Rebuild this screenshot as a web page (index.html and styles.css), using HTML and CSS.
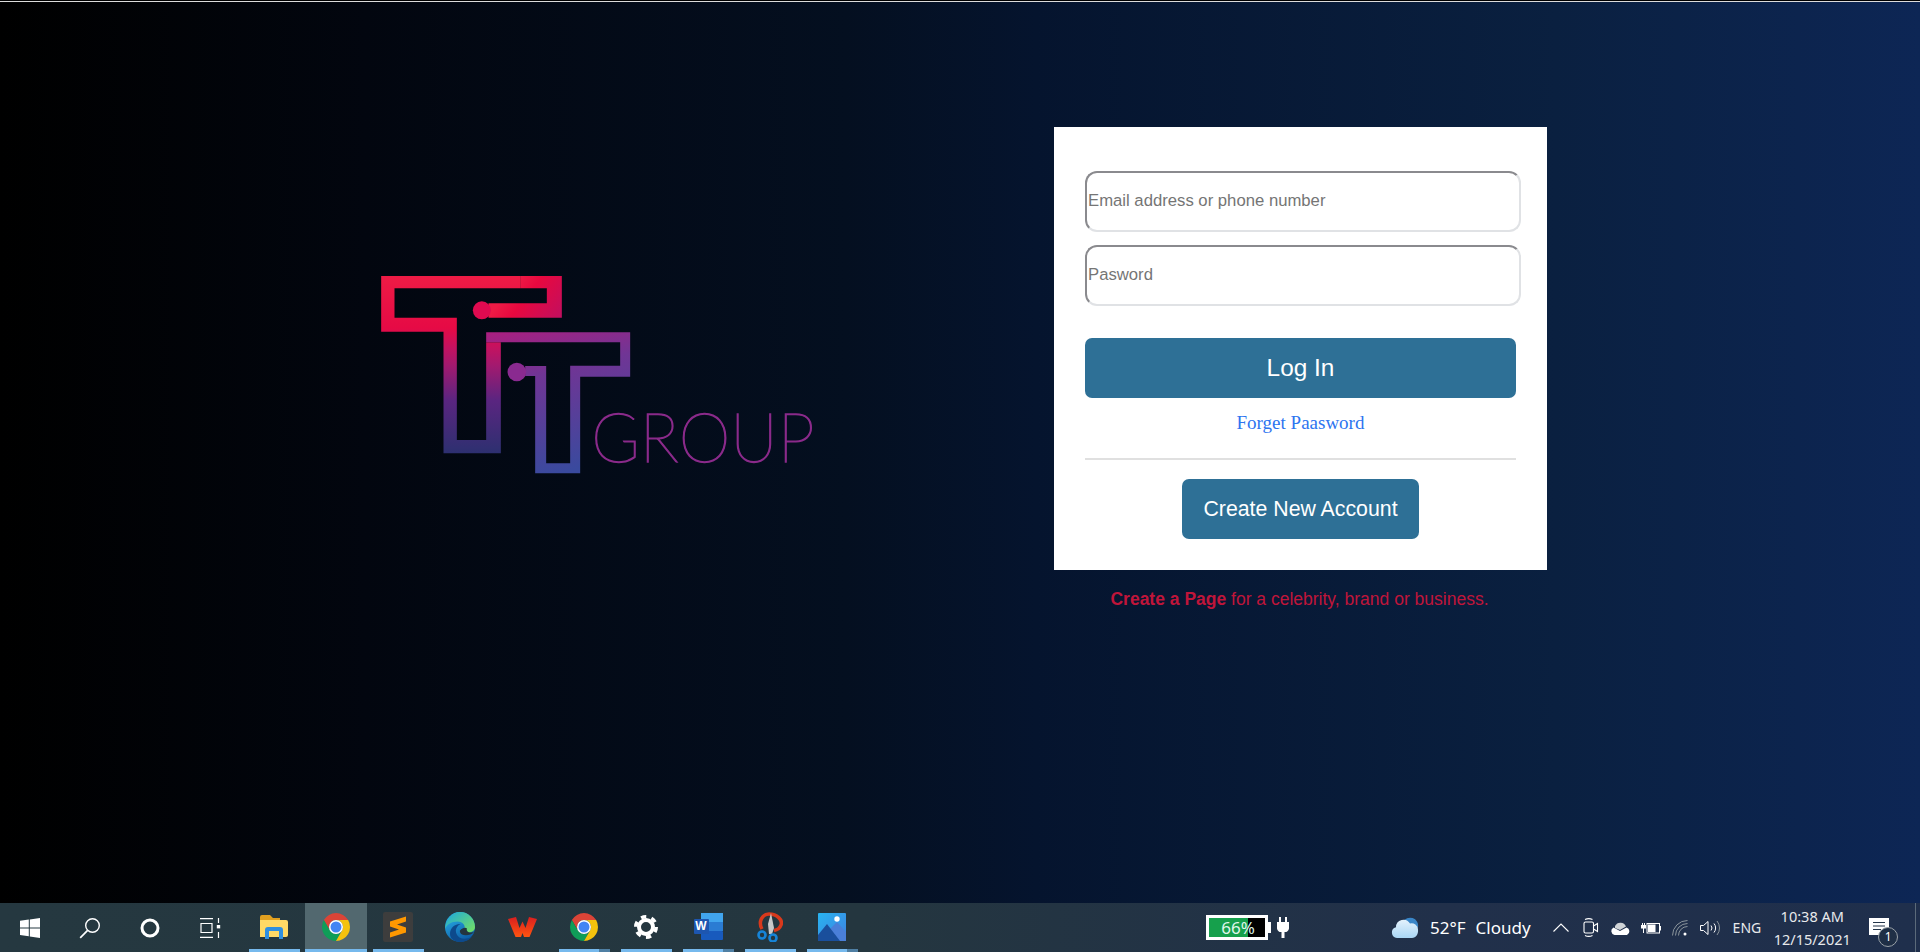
FILE: index.html
```html
<!DOCTYPE html>
<html lang="en">
<head>
<meta charset="utf-8">
<title>TT Group</title>
<link rel="stylesheet" href="styles.css">
</head>
<body>
<svg class="defs" width="0" height="0" aria-hidden="true">
  <defs>
    <symbol id="chrome" viewBox="0 0 24 24">
      <path fill="#db4437" d="M1.61 6A12 12 0 0 1 22.39 6H12A6 6 0 0 0 6.8 15Z"/>
      <path fill="#0f9d58" d="M1.61 6L6.8 15A6 6 0 0 0 17.2 15L12 24A12 12 0 0 1 1.61 6Z"/>
      <path fill="#f4c20d" d="M22.39 6H12A6 6 0 0 1 17.2 15L12 24A12 12 0 0 0 22.39 6Z"/>
      <circle cx="12" cy="12" r="6" fill="#fff"/>
      <circle cx="12" cy="12" r="4.7" fill="#4285f4"/>
    </symbol>
    <linearGradient id="t0" gradientUnits="userSpaceOnUse" x1="470" y1="90" x2="610" y2="200">
      <stop offset="0" stop-color="#ee1b45"/>
      <stop offset=".3" stop-color="#e8083f"/>
      <stop offset="1" stop-color="#c00f60"/>
    </linearGradient>
    <linearGradient id="t1" gradientUnits="userSpaceOnUse" x1="0" y1="80" x2="0" y2="610">
      <stop offset="0" stop-color="#ee1b45"/>
      <stop offset=".29" stop-color="#e60a45"/>
      <stop offset=".4" stop-color="#c41260"/>
      <stop offset=".51" stop-color="#a01a70"/>
      <stop offset=".7" stop-color="#5a2580"/>
      <stop offset="1" stop-color="#2d3070"/>
    </linearGradient>
    <linearGradient id="t2" gradientUnits="userSpaceOnUse" x1="480" y1="225" x2="590" y2="670">
      <stop offset="0" stop-color="#aa1f80"/>
      <stop offset=".35" stop-color="#703595"/>
      <stop offset="1" stop-color="#3a4a9e"/>
    </linearGradient>
    <linearGradient id="edgeBase" x1="0" y1="0" x2=".5" y2="1">
      <stop offset="0" stop-color="#2bb8ee"/>
      <stop offset="1" stop-color="#0e5fa8"/>
    </linearGradient>
    <linearGradient id="edgeTop" x1="0" y1="0" x2="1" y2=".8">
      <stop offset="0" stop-color="#1aa7e0"/>
      <stop offset="1" stop-color="#6fdc6a"/>
    </linearGradient>
    <linearGradient id="photoBg" x1="0" y1="0" x2="1" y2="1">
      <stop offset="0" stop-color="#28b4f0"/>
      <stop offset="1" stop-color="#3f7fe0"/>
    </linearGradient>
    <linearGradient id="cloud" x1="0" y1="0" x2="0" y2="1">
      <stop offset="0" stop-color="#e4f2fc"/>
      <stop offset="1" stop-color="#a9d6f5"/>
    </linearGradient>
    <linearGradient id="wps" x1="0" y1="0" x2="0" y2="1">
      <stop offset="0" stop-color="#d91f20"/>
      <stop offset="1" stop-color="#ff5410"/>
    </linearGradient>
  </defs>
</svg>

<main class="page">
  <svg class="logo" viewBox="60 75 1400 600" role="img" aria-label="TT Group">
    <path fill="url(#t1)" d="M480 115H103V203H290V570H378V277H422V610H250V245H63V78H480Z"/>
    <path fill="url(#t0)" d="M385 160H560V115H480V78H605V203H385Z"/>
    <circle cx="365" cy="181" r="27" fill="#e00a50"/>
    <path fill="url(#t2)" d="M378 277V247H810V380H660V670H525V378H495V348H558V640H630V347H780V277Z"/>
    <circle cx="470" cy="366" r="28" fill="#8a2a90"/>
    <text class="logo-word" x="693" y="635" textLength="670" lengthAdjust="spacingAndGlyphs">GROUP</text>
  </svg>

  <section class="side">
    <form class="card">
      <input class="field" type="text" placeholder="Email address or phone number">
      <input class="field field-second" type="password" placeholder="Pasword">
      <button class="btn btn-login" type="button">Log In</button>
      <a class="forgot" href="#">Forget Paasword</a>
      <hr class="rule">
      <button class="btn btn-create" type="button">Create New Account</button>
    </form>
    <p class="tagline"><b>Create a Page</b> for a celebrity, brand or business.</p>
  </section>
</main>

<footer class="taskbar">
  <div class="sys-btn">
    <svg width="22" height="22" viewBox="0 0 22 22"><path fill="#fff" d="M1 3.8L9.8 2.6V10.4H1ZM10.8 2.4L21 1V10.4H10.8ZM1 11.4H9.8V19.3L1 18.1ZM10.8 11.4H21V21L10.8 19.5Z"/></svg>
  </div>
  <div class="sys-btn">
    <svg width="22" height="22" viewBox="0 0 22 22" fill="none" stroke="#fff" stroke-width="1.4"><circle cx="13.5" cy="8.5" r="6.8"/><path d="M8.6 13.4L1.2 20.8" stroke-width="1.7"/></svg>
  </div>
  <div class="sys-btn">
    <svg width="20" height="20" viewBox="0 0 20 20" fill="none" stroke="#fff" stroke-width="3"><circle cx="10" cy="10" r="8"/></svg>
  </div>
  <div class="sys-btn">
    <svg width="22" height="20" viewBox="0 0 22 20" fill="none" stroke="#fff" stroke-width="1.2"><path d="M1 .6H14M1 19.4H14M2 5.5H13V14.5H2ZM19.5 0V5M19.5 14V20"/><rect x="17.8" y="7" width="3.4" height="3.4" fill="#fff" stroke="none"/></svg>
  </div>

  <div class="apps">
    <div class="app open">
      <svg width="28" height="24" viewBox="0 0 28 24"><path fill="#e0a020" d="M0 2a2 2 0 0 1 2-2H10l3 3H20V8H0Z"/><path fill="#ffd966" d="M0 5H26a2 2 0 0 1 2 2V20a2 2 0 0 1-2 2H0Z"/><path fill="#2f8fe0" d="M5 24V15a3 3 0 0 1 3-3H20a3 3 0 0 1 3 3V24H19V16H9V24Z"/></svg>
    </div>
    <div class="app open active"><svg width="28" height="28"><use href="#chrome"/></svg></div>
    <div class="app open">
      <svg width="30" height="30" viewBox="0 0 30 30"><rect width="30" height="30" rx="2" fill="#3d3d3d"/><path fill="#ff9800" d="M23 4.500V9.500L14 12.500L23 15.500V20.500L7 25.500V20.500L16 17.500L7 14.500V9.500Z"/></svg>
    </div>
    <div class="app">
      <svg width="30" height="30" viewBox="0 0 30 30"><circle cx="15" cy="15" r="15" fill="url(#edgeBase)"/><path fill="url(#edgeTop)" d="M15 0A15 15 0 0 1 30 15C30 19 26.500 20.500 23 20.500C19 20.500 17.500 18.500 19.500 16C20.500 14 18 9.500 12.500 9.500C6 9.500 1.500 13 0 17C.5 8 7 0 15 0Z"/><path fill="#0d4a8c" d="M5 22C5 15 11 11.500 15.500 12C9.500 15 9.500 22 14.500 25.500C18 27.500 23 27 27 24.500C24 28.500 19.500 30 15 30C9 29.500 5 26.500 5 22Z"/><path fill="#24353f" d="M15 18.500C17.500 15.500 20.500 15 22 16.500C21 18.500 23 21 27 20.500L29 20C26 23.500 20 24 17 22.500C15.500 21.500 14.500 20 15 18.500Z"/></svg>
    </div>
    <div class="app">
      <svg width="29" height="20" viewBox="0 0 29 20"><path fill="url(#wps)" d="M0 2L8 0L11.500 11L14.500 4.500L17.500 11L21 0L29 2L21.500 20H16L14.500 16L13 20H7.500Z"/></svg>
    </div>
    <div class="app open stacked"><svg width="28" height="28"><use href="#chrome"/></svg></div>
    <div class="app open">
      <svg width="24" height="24" viewBox="0 0 24 24"><circle cx="12" cy="12" r="7" fill="none" stroke="#fff" stroke-width="4"/><circle cx="12" cy="12" r="10.200" fill="none" stroke="#fff" stroke-width="3.600" stroke-dasharray="5.300 5.380"/></svg>
    </div>
    <div class="app open stacked">
      <div class="word-icon">
        <svg width="29" height="27" viewBox="0 0 29 27"><rect x="7" width="22" height="9" fill="#41a5ee"/><rect x="7" y="9" width="22" height="9" fill="#2b7cd3"/><rect x="7" y="18" width="22" height="9" rx="1" fill="#185abd"/></svg>
        <span class="word-w">W</span>
      </div>
    </div>
    <div class="app open">
      <svg width="26" height="30" viewBox="0 0 26 30"><path fill="none" stroke="#d8391c" stroke-width="3.500" d="M5 17C1 10 5 2 12 2C20 2 26 8 24 13C23 16 20 18 17 18.500"/><path fill="#c9c9c9" d="M14 1L17 16L15 22H12L11 12Z"/><circle cx="5" cy="23" r="3.500" fill="none" stroke="#1684d8" stroke-width="2.600"/><circle cx="16" cy="26" r="3.500" fill="none" stroke="#1684d8" stroke-width="2.600"/></svg>
    </div>
    <div class="app open stacked">
      <svg width="28" height="28" viewBox="0 0 28 28"><rect width="28" height="28" rx="1" fill="url(#photoBg)"/><circle cx="19" cy="6" r="2.700" fill="#fff"/><path fill="#4a7fd8" d="M12 16L19 9L28 19V28H14Z"/><path fill="#1a4f9c" d="M0 22L9 11L22 28H0Z"/></svg>
    </div>
  </div>

  <div class="meter">
    <span class="meter-body"><span class="meter-text">66%</span></span>
    <span class="meter-nub"></span>
  </div>
  <svg class="plug" width="12" height="21" viewBox="0 0 12 21"><path fill="#fff" d="M2 0H4V5H8V0H10V5H12V11.500A4 4 0 0 1 7.500 15V21H4.500V15A4 4 0 0 1 0 11.500V5H2Z"/></svg>

  <div class="weather">
    <svg width="28" height="22" viewBox="0 0 28 22"><path fill="#3a86c8" d="M12 5A8 8 0 0 1 27 10L20 14Z"/><path fill="url(#cloud)" d="M6 21A5.500 5.500 0 0 1 5 10.200A7.500 7.500 0 0 1 19 6.500A6.500 6.500 0 0 1 27 12.500C27.500 17 25 21 21 21Z"/></svg>
    <span class="weather-temp">52°F</span>
    <span class="weather-sky">Cloudy</span>
  </div>

  <div class="tray">
    <div class="tray-slot"><svg width="16" height="9" viewBox="0 0 16 9" fill="none" stroke="#fff" stroke-width="1.100"><path d="M.5 8.500L8 1L15.500 8.500"/></svg></div>
    <div class="tray-slot"><svg width="16" height="19" viewBox="0 0 16 19" fill="none" stroke="#fff" stroke-width="1.100"><rect x="1" y="4" width="9.500" height="11" rx="1.500"/><path d="M10.500 8L14.500 5.500V13.500L10.500 11M2 1.500C4.500.3 7 .3 9.500 1.500M2 17.500C4.500 18.700 7 18.700 9.500 17.500"/></svg></div>
    <div class="tray-slot"><svg width="21" height="14" viewBox="0 0 21 14"><path fill="#cfd3d6" d="M5 5A6 6 0 0 1 16 5.500L10 9L5 7Z"/><path fill="#fff" d="M4.500 14A4 4 0 0 1 3.500 6.500L10 10L16.500 6.500A4 4 0 0 1 17 14Z"/></svg></div>
    <div class="tray-slot"><svg width="20" height="12" viewBox="0 0 20 12"><path fill="#fff" d="M1 1H2V3H3V1H4V3H5V6.500H3V11H2V6.500H0V3H1Z"/><rect x="6" y="1.500" width="12.500" height="9.500" fill="none" stroke="#fff"/><rect x="7" y="2.500" width="7.500" height="7.500" fill="#fff"/><rect x="19" y="4" width="1" height="4.500" fill="#fff"/></svg></div>
    <div class="tray-slot"><svg width="17" height="16" viewBox="0 0 17 16" fill="none" stroke="#8b959c" stroke-width="1"><path d="M.5 15.500A15 15 0 0 1 15.500.5M3.500 15.500A12 12 0 0 1 15.500 3.500M6.500 15.500A9 9 0 0 1 15.500 6.500"/><circle cx="13" cy="14" r="1.500" fill="#fff" stroke="none"/></svg></div>
    <div class="tray-slot"><svg width="21" height="16" viewBox="0 0 21 16" fill="none" stroke="#fff" stroke-width="1"><path d="M.5 5.500H3.500L8 1.500V14.500L3.500 10.500H.5Z"/><path d="M11 5.500A4 4 0 0 1 11 10.500M14 3.500A7 7 0 0 1 14 12.500" /><path d="M17 1A11 11 0 0 1 17 15" stroke="#8b959c"/></svg></div>
  </div>
  <span class="lang">ENG</span>
  <div class="clock"><span>10:38 AM</span><span>12/15/2021</span></div>
  <div class="notify">
    <svg width="20" height="17" viewBox="0 0 20 17"><path fill="#fff" d="M0 0H20V17H0Z"/><path stroke="#24354a" stroke-width="1.100" d="M4 4.500H16M4 8H16M4 11.500H12"/></svg>
    <span class="badge">1</span>
  </div>
  <span class="desktop-edge"></span>
</footer>
</body>
</html>
```
FILE: styles.css
```css
* { box-sizing: border-box; }

html, body { margin: 0; height: 100%; }

body {
  display: flex;
  flex-direction: column;
  height: 952px;
  overflow: hidden;
  font-family: "Liberation Sans", Arial, sans-serif;
  background: linear-gradient(90deg, #000 0%, #02060f 19%, #040f20 44%, #05142e 54%, #0a2040 81%, #0d2655 100%);
  border-top: 1px solid #000;
}

.defs { position: absolute; }

.page {
  flex: 1;
  display: flex;
  align-items: flex-start;
  padding: 125px 0 0 380px;
  border-top: 1px solid #dcdcdc;
}

.logo {
  width: 467px;
  height: 200px;
  margin-top: 148px;
  flex: none;
}

.logo-word {
  font-family: Lato, "Open Sans", sans-serif;
  font-weight: 100;
  font-size: 205px;
  fill: #8a2a8a;
  stroke: #8a2a8a;
  stroke-width: 4px;
}

.side {
  margin-left: 207px;
  width: 493px;
  flex: none;
}

.card {
  display: flex;
  flex-direction: column;
  align-items: flex-start;
  height: 443px;
  padding: 44px 31px 0 31px;
  background: #fff;
}

.field {
  width: 436px;
  height: 61px;
  flex: none;
  margin-right: -5px;
  padding: 0 0 2px 1px;
  border: 2px solid;
  border-color: #8a8a8e #e0e2e5 #e0e2e5 #8a8a8e;
  border-radius: 12px;
  font: 16.7px "Liberation Sans", Arial, sans-serif;
  background: #fff;
}

.field::placeholder { color: #757575; }

.field-second { margin-top: 13px; }

.btn {
  border: 0;
  border-radius: 7px;
  background: #2e7096;
  color: #fff;
  font-family: "Liberation Sans", Arial, sans-serif;
  height: 60px;
}

.btn-login {
  width: 431px;
  margin-top: 32px;
  font-size: 24.4px;
}

.forgot {
  align-self: stretch;
  margin-top: 15px;
  text-align: center;
  font: 19px/20px "Liberation Serif", "Times New Roman", serif;
  color: #2d74f0;
  text-decoration: none;
}

.rule {
  align-self: stretch;
  margin: 25px 0 19px;
  height: 2px;
  border: 0;
  background: #e0e0e0;
}

.btn-create {
  align-self: center;
  width: 237px;
  font-size: 21.3px;
}

.tagline {
  margin: 20px 2px 0 0;
  text-align: center;
  font-size: 17.5px;
  line-height: 18px;
  color: #c0153a;
}

.taskbar {
  flex: none;
  position: relative;
  display: flex;
  align-items: center;
  height: 49px;
  color: #fff;
  font-family: "Noto Sans", "Open Sans", sans-serif;
  background: linear-gradient(90deg, #253840 0%, #24363f 45%, #21304a 75%, #1f2f4c 100%);
}

.sys-btn {
  flex: none;
  width: 60px;
  height: 100%;
  display: flex;
  align-items: center;
  justify-content: center;
}

.apps {
  display: flex;
  height: 100%;
  margin-left: 3px;
}

.app {
  position: relative;
  flex: none;
  width: 62px;
  height: 100%;
  display: flex;
  align-items: center;
  justify-content: center;
  padding-bottom: 2px;
}

.app.open::after {
  content: "";
  position: absolute;
  left: 6px;
  right: 5px;
  bottom: 0;
  height: 3px;
  background: #76b9ed;
}

.app.active { background: #52686f; }
.app.active::after { left: 0; right: 0; }

.app.stacked::before {
  content: "";
  position: absolute;
  right: 5px;
  bottom: 0;
  width: 11px;
  height: 3px;
  background: #4f7fa3;
  z-index: 1;
}

.word-icon { position: relative; width: 29px; height: 27px; }
.word-icon svg { display: block; }

.word-w {
  position: absolute;
  left: 0;
  top: 6px;
  width: 15px;
  height: 15px;
  background: #1d56b0;
  border-radius: 1px;
  font: bold 12px/15px "Liberation Sans", Arial, sans-serif;
  text-align: center;
}

.meter {
  display: flex;
  align-items: center;
  margin-left: 343px;
  flex: none;
}

.meter-body {
  display: block;
  width: 62px;
  height: 25px;
  border: 3px solid #fff;
  background: linear-gradient(90deg, #16a04c 0 69%, #000 69%);
}

.meter-text {
  display: block;
  width: 42px;
  margin-left: 8px;
  font-size: 17px;
  line-height: 19px;
  text-align: center;
  color: #dff6ea;
}

.meter-nub {
  display: block;
  width: 3px;
  height: 11px;
  background: #fff;
}

.plug { margin-left: 6px; flex: none; }

.weather {
  display: flex;
  align-items: center;
  margin-left: 102px;
  font-size: 17px;
  flex: none;
}

.weather-temp { margin-left: 11px; }
.weather-sky { margin-left: 10px; }

.tray {
  display: flex;
  height: 100%;
  margin-left: 15px;
  flex: none;
}

.tray-slot {
  width: 30px;
  display: flex;
  align-items: center;
  justify-content: center;
}

.lang {
  margin-left: 7px;
  font-size: 14px;
  flex: none;
  color: #e8eaec;
}

.clock {
  width: 86px;
  margin-left: 8px;
  display: flex;
  flex-direction: column;
  align-items: center;
  font-size: 14.5px;
  line-height: 23px;
  flex: none;
  color: #e8eaec;
}

.notify {
  position: relative;
  margin-left: 14px;
  margin-top: -2px;
  display: flex;
  flex: none;
}

.badge {
  position: absolute;
  left: 9px;
  top: 9px;
  width: 20px;
  height: 20px;
  border-radius: 50%;
  border: 1px solid #9aa2a8;
  background: #1f2f46;
  font-size: 12px;
  line-height: 18px;
  text-align: center;
}

.desktop-edge {
  position: absolute;
  right: 4px;
  top: 0;
  bottom: 0;
  width: 1px;
  background: #5b6a7a;
}
```
